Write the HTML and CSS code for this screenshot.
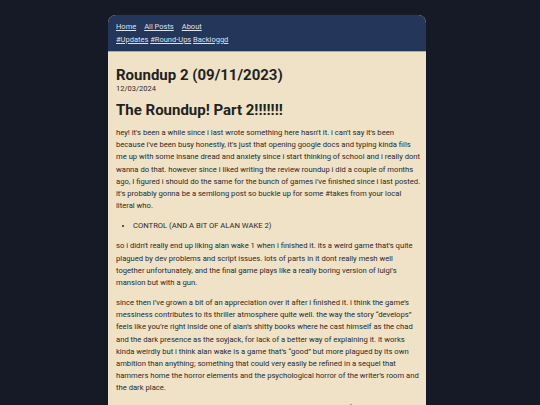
FILE: index.html
```html
<!DOCTYPE html>
<html>
<head>
<meta charset="utf-8">
<link rel="stylesheet" href="styles.css">
</head>
<body>
<div class="page">
  <header class="site-header">
    <nav class="nav-main">
      <a href="#">Home</a>
      <a href="#">All Posts</a>
      <a href="#">About</a>
    </nav>
    <nav class="nav-tags">
      <a href="#">#Updates</a> <a href="#">#Round-Ups</a> <a href="#">Backloggd</a>
    </nav>
  </header>
  <main class="post">
    <h1 class="post-title">Roundup 2 (09/11/2023)</h1>
    <div class="post-date">12/03/2024</div>
    <h2 class="post-heading">The Roundup! Part 2!!!!!!!</h2>
    <p>hey! it's been a while since i last wrote something here hasn't it. i can't say it's been because i've been busy honestly, it's just that opening google docs and typing kinda fills me up with some insane dread and anxiety since i start thinking of school and i really dont wanna do that. however since i liked writing the review roundup i did a couple of months ago, I figured i should do the same for the bunch of games i've finished since i last posted. it's probably gonna be a semilong post so buckle up for some #takes from your local literal who.</p>
    <ul class="games">
      <li>CONTROL (AND A BIT OF ALAN WAKE 2)</li>
    </ul>
    <p>so i didn't really end up liking alan wake 1 when i finished it. its a weird game that's quite plagued by dev problems and script issues. lots of parts in it dont really mesh well together unfortunately, and the final game plays like a really boring version of luigi's mansion but with a gun.</p>
    <p>since then i’ve grown a bit of an appreciation over it after i finished it. i think the game’s messiness contributes to its thriller atmosphere quite well. the way the story “develops” feels like you’re right inside one of alan’s shitty books where he cast himself as the chad and the dark presence as the soyjack, for lack of a better way of explaining it. it works kinda weirdly but i think alan wake is a game that’s “good” but more plagued by its own ambition than anything; something that could very easily be refined in a sequel that hammers home the horror elements and the psychological horror of the writer’s room and the dark place.</p>
    <p>control, on the other hand, is a game that i had been meaning to play for a long time and i finally got around to it this year.</p>
  </main>
</div>
</body>
</html>
```

FILE: styles.css
```css
html, body {
  margin: 0;
  padding: 0;
  background: #161a26;
}

body {
  font-family: Roboto, "Liberation Sans", sans-serif;
  font-size: 7.65px;
  line-height: 12.15px;
  color: #2a2a2a;
  padding: 15px 6px 0 0;
  height: 390px;
  overflow: hidden;
}

.page {
  width: 318px;
  margin: 0 auto;
  border-radius: 8px 8px 0 0;
  overflow: hidden;
  background: #f0e2c7;
}

.site-header {
  background: #243659;
  padding: 6px 8px 5px;
  border-bottom: 1px solid #a9a9ad;
  line-height: 12.5px;
  font-size: 7.5px;
}

.site-header a {
  color: #dde2ef;
  text-decoration: underline;
}

.nav-main {
  display: flex;
  gap: 8px;
}

.post {
  padding: 15px 5px 20px 8px;
}

.post-title {
  margin: 0;
  font-size: 15px;
  line-height: 16px;
  font-weight: 700;
  color: #222222;
}

.post-date {
  color: #2a2a2a;
  font-size: 7.5px;
}

.post-heading {
  margin: 7px 0 9px;
  font-size: 15px;
  line-height: 16px;
  font-weight: 700;
  color: #222222;
}

.post p {
  margin: 8px 0;
}

.games {
  margin: 8px 0;
  padding-left: 17px;
}
```
